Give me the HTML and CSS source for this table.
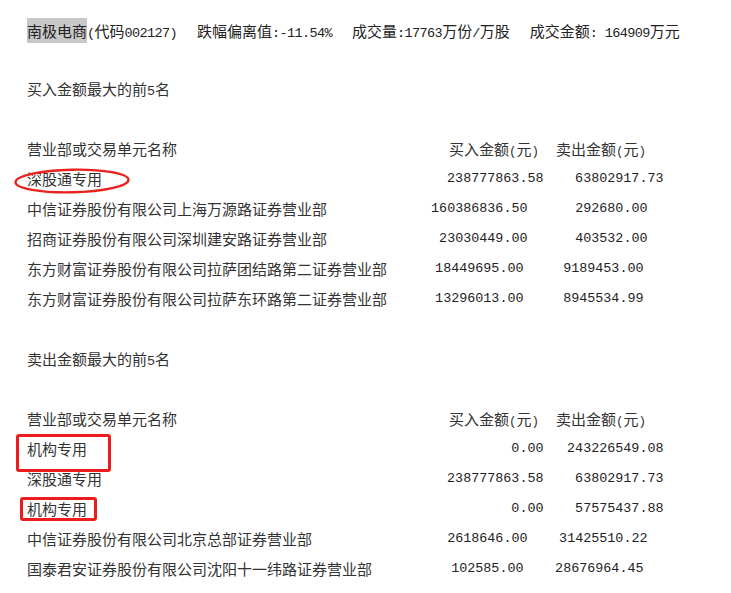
FILE: index.html
```html
<!DOCTYPE html>
<html lang="zh-CN">
<head>
    <meta charset="UTF-8">
    <title>南极电商 龙虎榜</title>
    <link rel="stylesheet" href="styles.css">
</head>
<body>
    <div class="page">
        <div class="title">
            <span class="seg"><span class="hl">南极电商</span><span class="m">(</span>代码<span class="m">002127)</span></span>
            <span class="seg">跌幅偏离值<span class="m">:-11.54%</span></span>
            <span class="seg">成交量<span class="m">:17763</span>万份<span class="m">/</span>万股</span>
            <span class="seg">成交金额<span class="m">: 164909</span>万元</span>
        </div>

        <!-- 买入前5 -->
        <div class="sect">
            <div class="caption">买入金额最大的前<span class="d">5</span>名</div>
            <div class="head">
                <span class="name">营业部或交易单元名称</span>
                <span class="hbuy">买入金额<span class="m">(</span>元<span class="m">)</span></span>
                <span>卖出金额<span class="m">(</span>元<span class="m">)</span></span>
            </div>
            <div class="row a">
                <span class="name">深股通专用<svg class="ring" viewBox="0 0 116 26"><ellipse cx="58" cy="13" rx="56.5" ry="11.3" transform="rotate(-1.2 58 13)"/></svg></span>
                <span class="buy">238777863.58</span><span class="sell">63802917.73</span>
            </div>
            <div class="row b">
                <span class="name">中信证券股份有限公司上海万源路证券营业部</span>
                <span class="buy">160386836.50</span><span class="sell">292680.00</span>
            </div>
            <div class="row b">
                <span class="name">招商证券股份有限公司深圳建安路证券营业部</span>
                <span class="buy">23030449.00</span><span class="sell">403532.00</span>
            </div>
            <div class="row c">
                <span class="name">东方财富证券股份有限公司拉萨团结路第二证券营业部</span>
                <span class="buy">18449695.00</span><span class="sell">9189453.00</span>
            </div>
            <div class="row c">
                <span class="name">东方财富证券股份有限公司拉萨东环路第二证券营业部</span>
                <span class="buy">13296013.00</span><span class="sell">8945534.99</span>
            </div>
        </div>

        <!-- 卖出前5 -->
        <div class="sect">
            <div class="caption">卖出金额最大的前<span class="d">5</span>名</div>
            <div class="head">
                <span class="name">营业部或交易单元名称</span>
                <span class="hbuy">买入金额<span class="m">(</span>元<span class="m">)</span></span>
                <span>卖出金额<span class="m">(</span>元<span class="m">)</span></span>
            </div>
            <div class="row a">
                <span class="name">机构专用<span class="box box-big"></span></span>
                <span class="buy">0.00</span><span class="sell">243226549.08</span>
            </div>
            <div class="row a">
                <span class="name">深股通专用</span>
                <span class="buy">238777863.58</span><span class="sell">63802917.73</span>
            </div>
            <div class="row a">
                <span class="name">机构专用<span class="box box-small"></span></span>
                <span class="buy">0.00</span><span class="sell">57575437.88</span>
            </div>
            <div class="row b">
                <span class="name">中信证券股份有限公司北京总部证券营业部</span>
                <span class="buy">2618646.00</span><span class="sell">31425510.22</span>
            </div>
            <div class="row c">
                <span class="name">国泰君安证券股份有限公司沈阳十一纬路证券营业部</span>
                <span class="buy">102585.00</span><span class="sell">28676964.45</span>
            </div>
        </div>
    </div>
</body>
</html>
```

FILE: styles.css
```css
body { margin: 0; background: #fff; color: #333; font-family: "Noto Sans CJK SC", sans-serif; font-size: 15px; line-height: 30px; }
.page { padding: 14px 0 0 27px; }
.m { font-family: "Liberation Mono", monospace; font-size: 12.5px; line-height: 1; }
.d { font-family: "Liberation Mono", monospace; font-size: 13.4px; line-height: 1; }

.title { display: flex; gap: 20px; height: 30px; box-sizing: border-box; padding-top: 4px; line-height: 25px; color: #222; }
.title .m { font-size: 13.5px; letter-spacing: -0.6px; }
.seg { white-space: pre; }
.hl { display: inline-block; background: #c8c8c8; height: 25px; }

.sect { margin-top: 30px; }
.caption { height: 30px; margin-bottom: 30px; }
.head { display: flex; height: 30px; }
.head .name { width: 422px; }
.hbuy { width: 107px; }

.row { display: flex; height: 30px; }
.row.a { width: 636.5px; }
.row.b { width: 620.5px; }
.row.c { width: 616.5px; }
.row .name { flex: 1; position: relative; }
.buy, .sell { width: 120px; text-align: right; font-family: "Liberation Mono", monospace; font-size: 13.4px; color: #222; }

/* red annotations */
.ring { position: absolute; left: -13px; top: 4px; width: 116px; height: 26px; fill: none; stroke: #e8221c; stroke-width: 2.4; }
.box { position: absolute; border: 3px solid #ee1c1c; border-radius: 3px; box-sizing: border-box; }
.box-big { left: -11px; top: 0; width: 95px; height: 38px; }
.box-small { left: -7px; top: 3px; width: 77px; height: 24px; }
```
